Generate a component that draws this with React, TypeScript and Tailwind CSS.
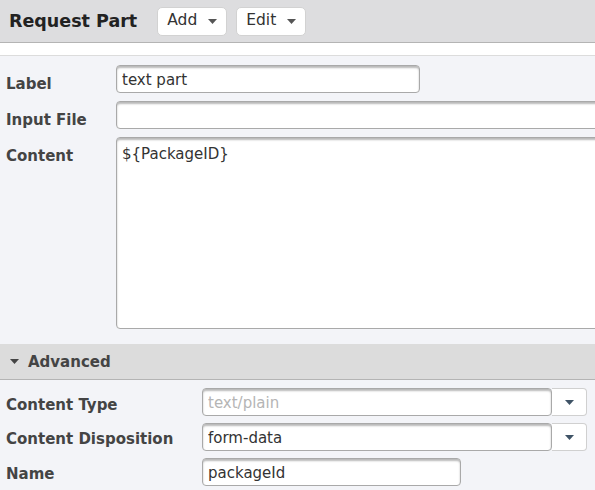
const font = { fontFamily: '"DejaVu Sans", Verdana, sans-serif' };

function Caret({ className }: { className?: string }) {
  return (
    <svg width="9" height="5" viewBox="0 0 9 5" className={className}>
      <path d="M0 0h9L4.5 5z" fill="currentColor" />
    </svg>
  );
}

function MenuButton({ label }: { label: string }) {
  return (
    <button className="flex h-[29px] w-[70px] items-center justify-center gap-[11px] rounded-[5px] border border-[#d2d2d2] bg-white text-[15.5px] text-[#333]">
      <span>{label}</span>
      <Caret className="text-[#555]" />
    </button>
  );
}

const inputCls =
  "h-[28px] rounded-[4px] border border-[#a9a9a9] bg-white px-[5px] pt-[1px] text-[15px] text-[#333] shadow-[inset_0_2px_2px_rgba(0,0,0,0.28)] outline-none";

const labelTop = "w-[116px] shrink-0 pl-[6px] pt-[11px] text-[15px] leading-[17px] font-bold text-[#444]";
const labelAdv = "w-[202px] shrink-0 pl-[6px] text-[15px] leading-[18px] font-bold text-[#444]";

export default function App() {
  return (
    <div style={font} className="h-[490px] w-[595px] overflow-hidden bg-[#f3f4f8]">
      {/* Header */}
      <div className="flex h-[43px] items-center border-b border-[#b4b4b4] bg-[#dddddf] pl-[9px]">
        <h1 className="mr-[20px] text-[17.5px] font-bold text-[#222]">Request Part</h1>
        <div className="flex gap-[9px]">
          <MenuButton label="Add" />
          <MenuButton label="Edit" />
        </div>
      </div>
      <div className="h-[13px] border-b border-[#dcdcdc] bg-white" />

      {/* Main fields */}
      <div className="flex flex-col gap-[8px] pt-[9px] pb-[15px]">
        <div className="flex items-start">
          <label className={labelTop}>Label</label>
          <input className={`${inputCls} w-[304px]`} defaultValue="text part" />
        </div>
        <div className="flex items-start">
          <label className={labelTop}>Input File</label>
          <input className={`${inputCls} w-[500px] shrink-0`} />
        </div>
        <div className="flex items-start">
          <label className={labelTop}>Content</label>
          <textarea
            className="h-[192px] w-[500px] shrink-0 resize-none rounded-[4px] border border-[#a9a9a9] bg-white px-[5px] pt-[5px] text-[15px] text-[#333] shadow-[inset_0_2px_2px_rgba(0,0,0,0.28)] outline-none"
            defaultValue="${PackageID}"
          />
        </div>
      </div>

      {/* Advanced */}
      <div className="flex h-[36px] items-center gap-[9px] border-b border-[#b4b4b4] bg-[#dcdcdc] pl-[10px]">
        <Caret className="text-[#444]" />
        <span className="pt-[2px] text-[15px] font-bold text-[#444]">Advanced</span>
      </div>

      <div className="flex flex-col gap-[7px] pt-[8px]">
        <div className="flex items-start">
          <label className={`${labelAdv} pt-[8px]`}>Content Type</label>
          <input className={`${inputCls} w-[350px] placeholder:text-[#b5b5b5]`} placeholder="text/plain" />
          <button className="flex h-[28px] w-[35px] items-center justify-center rounded-r-[4px] border border-l-0 border-[#d0d0d0] bg-white">
            <Caret className="text-[#3f5366]" />
          </button>
        </div>
        <div className="flex items-start">
          <label className={`${labelAdv} pt-[7px]`}>Content Disposition</label>
          <input className={`${inputCls} w-[350px]`} defaultValue="form-data" />
          <button className="flex h-[28px] w-[35px] items-center justify-center rounded-r-[4px] border border-l-0 border-[#d0d0d0] bg-white">
            <Caret className="text-[#3f5366]" />
          </button>
        </div>
        <div className="flex items-start">
          <label className={`${labelAdv} pt-[7px]`}>Name</label>
          <input className={`${inputCls} w-[259px]`} defaultValue="packageId" />
        </div>
      </div>
    </div>
  );
}
